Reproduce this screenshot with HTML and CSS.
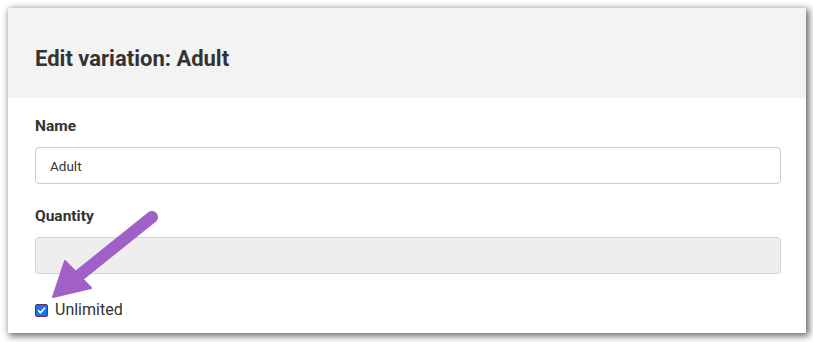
FILE: index.html
```html
<!DOCTYPE html>
<html>
<head>
<meta charset="utf-8">
<link rel="stylesheet" href="styles.css">
</head>
<body>
<div class="panel">
  <div class="panel-header">
    <h2 class="title">Edit variation: Adult</h2>
  </div>
  <div class="panel-body">
    <label class="field-label" for="name">Name</label>
    <input class="text-input" id="name" type="text" value="Adult">
    <label class="field-label qty-label" for="qty">Quantity</label>
    <input class="text-input disabled" id="qty" type="text" disabled>
    <label class="check-row">
      <span class="check-box"><svg viewBox="0 0 13 13" width="13" height="13"><path d="M3 6.8 L5.4 9.2 L10 3.8" fill="none" stroke="#fff" stroke-width="2" stroke-linecap="round" stroke-linejoin="round"/></svg></span>
      <span class="check-text">Unlimited</span>
    </label>
  </div>
</div>
<svg class="arrow" width="813" height="342" viewBox="0 0 813 342">
  <line x1="152" y1="217" x2="76" y2="278" stroke="#a15fc8" stroke-width="12" stroke-linecap="round"/>
  <polygon points="53,297 65,261 91,288" fill="#a15fc8" stroke="#a15fc8" stroke-width="2" stroke-linejoin="round"/>
</svg>
</body>
</html>
```

FILE: styles.css
```css
html, body {
  margin: 0;
  padding: 0;
  background: #ffffff;
}
body {
  font-family: Roboto, "Liberation Sans", Arial, sans-serif;
  color: #333;
  padding: 8px 7px 9px 8px;
  position: relative;
}
.panel {
  width: 798px;
  height: 325px;
  background: #fff;
  box-shadow: 2px 2px 7px 1px rgba(0,0,0,0.6);
  overflow: hidden;
}
.panel-header {
  height: 90px;
  background: #f3f3f3;
  padding: 0 27px;
  display: flex;
  align-items: center;
}
.title {
  margin: 10px 0 0 0;
  font-size: 22px;
  font-weight: 700;
  color: #333;
}
.panel-body {
  padding: 18px 25px 0 27px;
  display: flex;
  flex-direction: column;
}
.field-label {
  font-size: 15.5px;
  font-weight: 700;
  line-height: 20px;
  color: #333;
  margin-bottom: 11px;
}
.qty-label {
  margin-top: 22px;
}
.text-input {
  box-sizing: border-box;
  height: 37px;
  border: 1px solid #ccc;
  border-radius: 4px;
  padding: 0 14px;
  font-family: Roboto, "Liberation Sans", Arial, sans-serif;
  font-size: 13.5px;
  color: #333;
  background: #fff;
  outline: none;
}
.text-input.disabled {
  background: #eeeeee;
  border-color: #d4d4d4;
}
.check-row {
  display: flex;
  align-items: center;
  margin-top: 26px;
  gap: 7px;
}
.check-box {
  width: 13px;
  height: 13px;
  box-sizing: border-box;
  background: #1a73e8;
  border: 1px solid #6b2a5c;
  border-radius: 2px;
  display: flex;
  align-items: center;
  justify-content: center;
}
.check-box svg {
  width: 11px;
  height: 11px;
}
.check-text {
  font-size: 16px;
  color: #333;
  line-height: 20px;
}
.arrow {
  position: absolute;
  left: 0;
  top: 0;
  pointer-events: none;
}
```
